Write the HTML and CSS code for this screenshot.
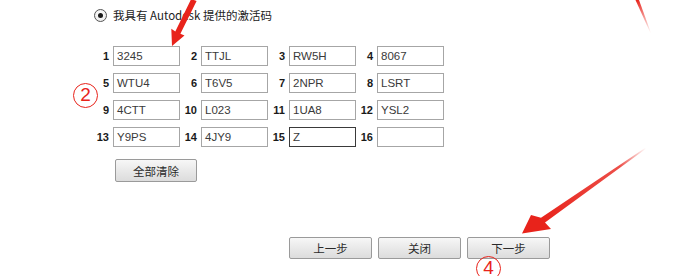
FILE: index.html
```html
<!DOCTYPE html>
<html lang="zh">
<head>
<meta charset="utf-8">
<title>激活</title>
<link rel="stylesheet" href="styles.css">
</head>
<body>
<div class="page">
  <div class="radio-row">
    <span class="radio"><span class="radio-dot"></span></span>
    <span class="radio-label">我具有 Autodesk 提供的激活码</span>
  </div>

  <div class="codes">
    <div class="cell"><span class="num">1</span><span class="field">3245</span></div>
    <div class="cell"><span class="num">2</span><span class="field">TTJL</span></div>
    <div class="cell"><span class="num">3</span><span class="field">RW5H</span></div>
    <div class="cell"><span class="num">4</span><span class="field">8067</span></div>
    <div class="cell"><span class="num">5</span><span class="field">WTU4</span></div>
    <div class="cell"><span class="num">6</span><span class="field">T6V5</span></div>
    <div class="cell"><span class="num">7</span><span class="field">2NPR</span></div>
    <div class="cell"><span class="num">8</span><span class="field">LSRT</span></div>
    <div class="cell"><span class="num">9</span><span class="field">4CTT</span></div>
    <div class="cell"><span class="num">10</span><span class="field">L023</span></div>
    <div class="cell"><span class="num">11</span><span class="field">1UA8</span></div>
    <div class="cell"><span class="num">12</span><span class="field">YSL2</span></div>
    <div class="cell"><span class="num">13</span><span class="field">Y9PS</span></div>
    <div class="cell"><span class="num">14</span><span class="field">4JY9</span></div>
    <div class="cell"><span class="num">15</span><span class="field field-focus">Z</span></div>
    <div class="cell"><span class="num">16</span><span class="field"></span></div>
  </div>

  <div class="clear-row"><span class="btn btn-clear">全部清除</span></div>

  <div class="actions">
    <span class="btn btn-action">上一步</span>
    <span class="btn btn-action">关闭</span>
    <span class="btn btn-action">下一步</span>
  </div>

  <span class="mark mark-2">2</span>
  <span class="mark mark-4">4</span>

  <svg class="arrows" width="693" height="276" viewBox="0 0 693 276" xmlns="http://www.w3.org/2000/svg">
    <defs>
      <linearGradient id="fadeA" x1="646" y1="148" x2="540" y2="221" gradientUnits="userSpaceOnUse">
        <stop offset="0" stop-color="#e8231b" stop-opacity="0"/>
        <stop offset="0.25" stop-color="#e8231b" stop-opacity="0.8"/>
        <stop offset="1" stop-color="#e8231b" stop-opacity="1"/>
      </linearGradient>
      <linearGradient id="fadeB" x1="636" y1="0" x2="651" y2="33" gradientUnits="userSpaceOnUse">
        <stop offset="0" stop-color="#e8231b" stop-opacity="1"/>
        <stop offset="1" stop-color="#e8231b" stop-opacity="0"/>
      </linearGradient>
    </defs>
    <!-- top arrow -->
    <polygon fill="#e8231b" points="191.2,-1 196.6,1 180.4,33.8 184.5,35.4 172,46 171.3,28.8 175.3,31.4"/>
    <!-- bottom right arrow -->
    <polygon fill="url(#fadeA)" points="645.7,147.4 646.3,148.6 545,222.6 551,229 522,233.5 531,215 541,217.8"/>
    <!-- top right tail -->
    <polygon fill="url(#fadeB)" points="635.5,0 639,0 651,33 650.4,33"/>
  </svg>
</div>
</body>
</html>
```

FILE: styles.css
```css
html, body {
  margin: 0;
  padding: 0;
  background: #ffffff;
}

.page {
  position: relative;
  width: 693px;
  height: 276px;
  overflow: hidden;
  font-family: "Liberation Sans", Arial, "Noto Sans CJK SC", sans-serif;
  color: #222;
}

.radio-row {
  display: flex;
  align-items: center;
  gap: 6px;
  margin-left: 94px;
  padding-top: 9px;
  height: 13px;
}

.radio {
  box-sizing: border-box;
  width: 13px;
  height: 13px;
  border-radius: 50%;
  border: 1px solid #555;
  background: radial-gradient(circle at 50% 40%, #ffffff, #e6e6e6);
  display: flex;
  align-items: center;
  justify-content: center;
}

.radio-dot {
  width: 5px;
  height: 5px;
  border-radius: 50%;
  background: #1a1a1a;
}

.radio-label {
  font-family: "Noto Sans CJK SC", "Liberation Sans", sans-serif;
  font-size: 11.5px;
  color: #222;
  line-height: 13px;
}

.codes {
  display: grid;
  grid-template-columns: repeat(4, 88px);
  row-gap: 7px;
  margin-left: 92px;
  margin-top: 24px;
}

.cell {
  display: flex;
  align-items: center;
  height: 20px;
}

.num {
  width: 17px;
  margin-right: 4px;
  text-align: right;
  font-weight: bold;
  font-size: 11px;
  color: #1a1a1a;
}

.field {
  box-sizing: border-box;
  width: 67px;
  height: 20px;
  border: 1px solid #a6a6a6;
  background: #fff;
  padding-left: 3px;
  font-size: 11.5px;
  line-height: 18px;
  color: #3a3a3a;
}

.field-focus {
  border-color: #3a3a3a;
}

.clear-row {
  display: flex;
  margin-left: 115px;
  margin-top: 12px;
}

.btn {
  box-sizing: border-box;
  display: flex;
  align-items: center;
  justify-content: center;
  border: 1px solid #9a9a9a;
  border-radius: 2px;
  background: linear-gradient(#f7f7f7, #e9e9e9 50%, #dcdcdc);
  font-family: "Noto Sans CJK SC", "Liberation Sans", sans-serif;
  font-size: 11.5px;
  color: #2a2a2a;
}

.btn-clear {
  width: 82px;
  height: 23px;
}

.actions {
  display: flex;
  gap: 6px;
  margin-left: 289px;
  margin-top: 55px;
}

.btn-action {
  width: 83px;
  height: 22px;
}

.mark {
  position: absolute;
  box-sizing: border-box;
  width: 25px;
  height: 25px;
  border: 1.5px solid #e8231b;
  border-radius: 50%;
  color: #e8231b;
  font-family: "Liberation Sans", sans-serif;
  font-size: 19px;
  line-height: 22px;
  text-align: center;
}

.mark-2 {
  left: 73px;
  top: 83px;
}

.mark-4 {
  left: 476px;
  top: 256px;
}

.arrows {
  position: absolute;
  left: 0;
  top: 0;
  pointer-events: none;
}
```
